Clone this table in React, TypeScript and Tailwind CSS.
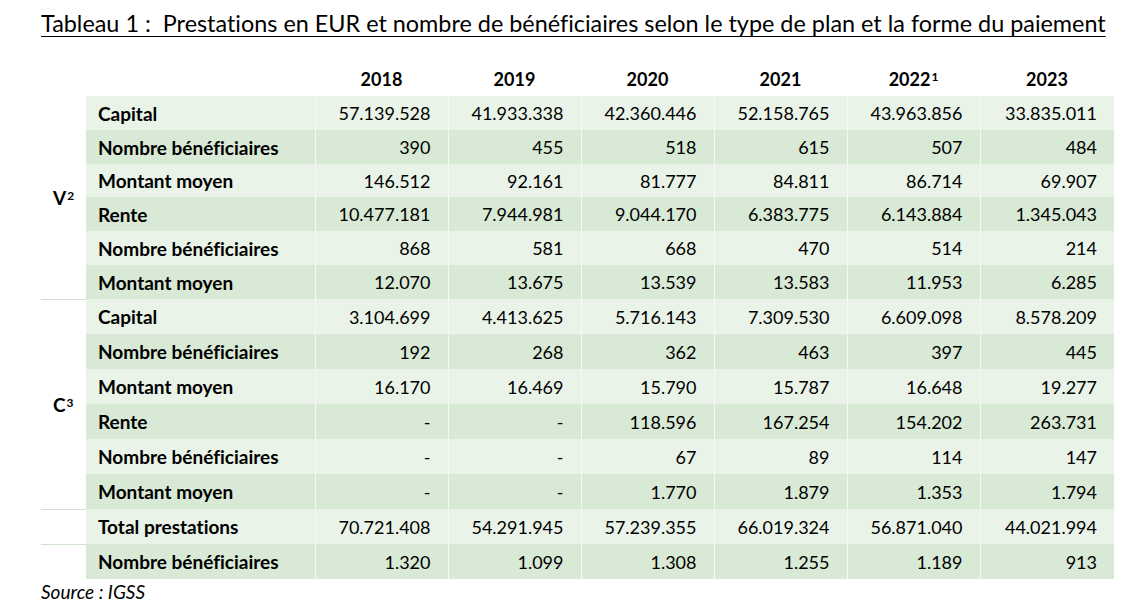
import React from "react";

type Row = { label: string; values: string[]; h: string };

const years: { y: string; sup?: string }[] = [
  { y: "2018" },
  { y: "2019" },
  { y: "2020" },
  { y: "2021" },
  { y: "2022", sup: "1" },
  { y: "2023" },
];

const vRows: Row[] = [
  { label: "Capital", values: ["57.139.528", "41.933.338", "42.360.446", "52.158.765", "43.963.856", "33.835.011"], h: "h-[34px]" },
  { label: "Nombre bénéficiaires", values: ["390", "455", "518", "615", "507", "484"], h: "h-[34px]" },
  { label: "Montant moyen", values: ["146.512", "92.161", "81.777", "84.811", "86.714", "69.907"], h: "h-[33px]" },
  { label: "Rente", values: ["10.477.181", "7.944.981", "9.044.170", "6.383.775", "6.143.884", "1.345.043"], h: "h-[34px]" },
  { label: "Nombre bénéficiaires", values: ["868", "581", "668", "470", "514", "214"], h: "h-[34px]" },
  { label: "Montant moyen", values: ["12.070", "13.675", "13.539", "13.583", "11.953", "6.285"], h: "h-[34px]" },
];

const cRows: Row[] = [
  { label: "Capital", values: ["3.104.699", "4.413.625", "5.716.143", "7.309.530", "6.609.098", "8.578.209"], h: "h-[35px]" },
  { label: "Nombre bénéficiaires", values: ["192", "268", "362", "463", "397", "445"], h: "h-[35px]" },
  { label: "Montant moyen", values: ["16.170", "16.469", "15.790", "15.787", "16.648", "19.277"], h: "h-[35px]" },
  { label: "Rente", values: ["-", "-", "118.596", "167.254", "154.202", "263.731"], h: "h-[35px]" },
  { label: "Nombre bénéficiaires", values: ["-", "-", "67", "89", "114", "147"], h: "h-[35px]" },
  { label: "Montant moyen", values: ["-", "-", "1.770", "1.879", "1.353", "1.794"], h: "h-[35px]" },
];

const totalRows: Row[] = [
  { label: "Total prestations", values: ["70.721.408", "54.291.945", "57.239.355", "66.019.324", "56.871.040", "44.021.994"], h: "h-[35px]" },
  { label: "Nombre bénéficiaires", values: ["1.320", "1.099", "1.308", "1.255", "1.189", "913"], h: "h-[35px]" },
];

const LIGHT = "bg-[#eaf3e8]";
const DARK = "bg-[#d8e9d5]";

function Sup({ children }: { children: React.ReactNode }) {
  return <sup className="text-[12px] relative top-[-5px] ml-[1px]">{children}</sup>;
}

function DataCells({ row, idx }: { row: Row; idx: number }) {
  const bg = idx % 2 === 0 ? LIGHT : DARK;
  return (
    <>
      <td className={`${bg} ${row.h} pl-[12px] font-bold text-[19px] leading-none whitespace-nowrap`}>{row.label}</td>
      {row.values.map((v, i) => (
        <td
          key={i}
          className={`${bg} ${row.h} border-l border-[#f4f9f3] pr-[17px] text-right text-[18px] leading-none whitespace-nowrap`}
        >
          {v}
        </td>
      ))}
    </>
  );
}

export default function App() {
  return (
    <div
      className="w-[1144px] h-[616px] bg-white text-black overflow-hidden [font-variant-ligatures:none]"
      style={{ fontFamily: "Lato, 'Open Sans', sans-serif" }}
    >
      <div className="pl-[41px] pt-[8px] text-[23.4px] leading-[30px] underline underline-offset-[4px] decoration-[1px] whitespace-nowrap">
        Tableau 1 :&nbsp; Prestations en EUR et nombre de bénéficiaires selon le type de plan et la forme du paiement
      </div>
      <table className="ml-[41px] mt-[24px] border-collapse table-fixed w-[1073px]">
        <colgroup>
          <col className="w-[45px]" />
          <col className="w-[229px]" />
          <col className="w-[133px]" />
          <col className="w-[133px]" />
          <col className="w-[133px]" />
          <col className="w-[133px]" />
          <col className="w-[133px]" />
          <col className="w-[134px]" />
        </colgroup>
        <thead>
          <tr className="h-[34px]">
            <th></th>
            <th></th>
            {years.map((y) => (
              <th key={y.y} className="text-center font-bold text-[18px] leading-none">
                {y.y}
                {y.sup && <Sup>{y.sup}</Sup>}
              </th>
            ))}
          </tr>
        </thead>
        <tbody>
          {vRows.map((r, i) => (
            <tr key={"v" + i}>
              {i === 0 && (
                <td rowSpan={vRows.length} className="align-middle pl-[12px] font-bold text-[19px] leading-none">
                  V<Sup>2</Sup>
                </td>
              )}
              <DataCells row={r} idx={i} />
            </tr>
          ))}
          {cRows.map((r, i) => (
            <tr key={"c" + i}>
              {i === 0 && (
                <td rowSpan={cRows.length} className="border-t border-[#cfe3cc] align-middle pl-[12px] font-bold text-[19px] leading-none">
                  C<Sup>3</Sup>
                </td>
              )}
              <DataCells row={r} idx={6 + i} />
            </tr>
          ))}
          {totalRows.map((r, i) => (
            <tr key={"t" + i}>
              <td className="border-t border-[#cfe3cc]"></td>
              <DataCells row={r} idx={12 + i} />
            </tr>
          ))}
        </tbody>
      </table>
      <div className="pl-[41px] pt-[1px] italic text-[19px] leading-[24px]">Source : IGSS</div>
    </div>
  );
}
